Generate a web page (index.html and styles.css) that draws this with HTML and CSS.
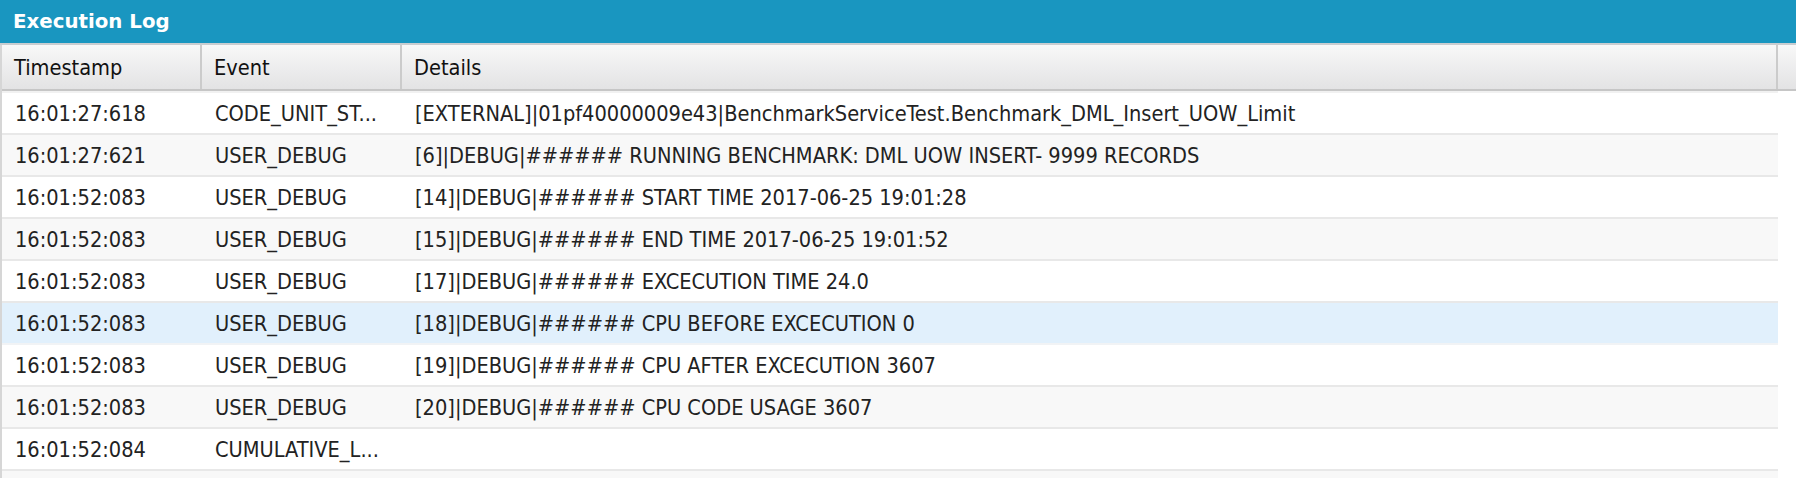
FILE: index.html
```html
<!DOCTYPE html>
<html>
<head>
<meta charset="utf-8">
<link rel="stylesheet" href="styles.css">
</head>
<body>
<div class="panel">
  <div class="titlebar">Execution Log</div>
  <div class="table">
    <div class="thead">
      <div class="th">Timestamp</div>
      <div class="th">Event</div>
      <div class="th">Details</div>
      <div class="th filler"></div>
    </div>
    <div class="tbody">
      <div class="tr"><div class="td">16:01:27:618</div><div class="td">CODE_UNIT_ST...</div><div class="td">[EXTERNAL]|01pf40000009e43|BenchmarkServiceTest.Benchmark_DML_Insert_UOW_Limit</div></div>
      <div class="tr alt"><div class="td">16:01:27:621</div><div class="td">USER_DEBUG</div><div class="td">[6]|DEBUG|###### RUNNING BENCHMARK: DML UOW INSERT- 9999 RECORDS</div></div>
      <div class="tr"><div class="td">16:01:52:083</div><div class="td">USER_DEBUG</div><div class="td">[14]|DEBUG|###### START TIME 2017-06-25 19:01:28</div></div>
      <div class="tr alt"><div class="td">16:01:52:083</div><div class="td">USER_DEBUG</div><div class="td">[15]|DEBUG|###### END TIME 2017-06-25 19:01:52</div></div>
      <div class="tr"><div class="td">16:01:52:083</div><div class="td">USER_DEBUG</div><div class="td">[17]|DEBUG|###### EXCECUTION TIME 24.0</div></div>
      <div class="tr selected"><div class="td">16:01:52:083</div><div class="td">USER_DEBUG</div><div class="td">[18]|DEBUG|###### CPU BEFORE EXCECUTION 0</div></div>
      <div class="tr"><div class="td">16:01:52:083</div><div class="td">USER_DEBUG</div><div class="td">[19]|DEBUG|###### CPU AFTER EXCECUTION 3607</div></div>
      <div class="tr alt"><div class="td">16:01:52:083</div><div class="td">USER_DEBUG</div><div class="td">[20]|DEBUG|###### CPU CODE USAGE 3607</div></div>
      <div class="tr"><div class="td">16:01:52:084</div><div class="td">CUMULATIVE_L...</div><div class="td"></div></div>
      <div class="tr alt"><div class="td"></div><div class="td"></div><div class="td"></div></div>
    </div>
  </div>
</div>
</body>
</html>
```

FILE: styles.css
```css
html, body {
  margin: 0;
  padding: 0;
  background: #ffffff;
  overflow: hidden;
}
.panel {
  width: 1796px;
  height: 478px;
  overflow: hidden;
}
.titlebar {
  height: 43px;
  background: #1996c0;
  color: #ffffff;
  font-family: "DejaVu Sans", Verdana, sans-serif;
  font-weight: bold;
  font-size: 19.8px;
  line-height: 44px;
  padding-left: 13px;
  border-bottom: 2px solid #c9cdd0;
}
.table {
  border-left: 2px solid #d6d6d6;
  font-family: "DejaVu Sans", Tahoma, sans-serif;
  font-stretch: condensed;
  font-size: 21.6px;
  color: #222222;
}
.thead {
  display: grid;
  grid-template-columns: 200px 200px 1376px 18px;
  height: 44px;
  background: linear-gradient(#f8f8f8, #e3e3e4);
  border-bottom: 2px solid #c6c6c6;
}
.th {
  display: flex;
  align-items: center;
  padding-left: 12px;
  border-right: 2px solid #cbcbcb;
  color: #111111;
}
.th.filler {
  border-right: none;
  padding: 0;
}
.tbody {
  width: 1776px;
  border-top: 2px solid #f1f1f1;
}
.tr {
  display: grid;
  grid-template-columns: 200px 200px 1376px;
  height: 40px;
  background: #ffffff;
  border-bottom: 2px solid #e8e8e8;
}
.tr.alt {
  background: #f8f8f8;
}
.tr.selected {
  background: #e1f0fc;
  border-bottom-color: #f1f3f5;
}
.td {
  display: flex;
  align-items: center;
  padding-left: 13px;
  white-space: nowrap;
  overflow: hidden;
}
```
